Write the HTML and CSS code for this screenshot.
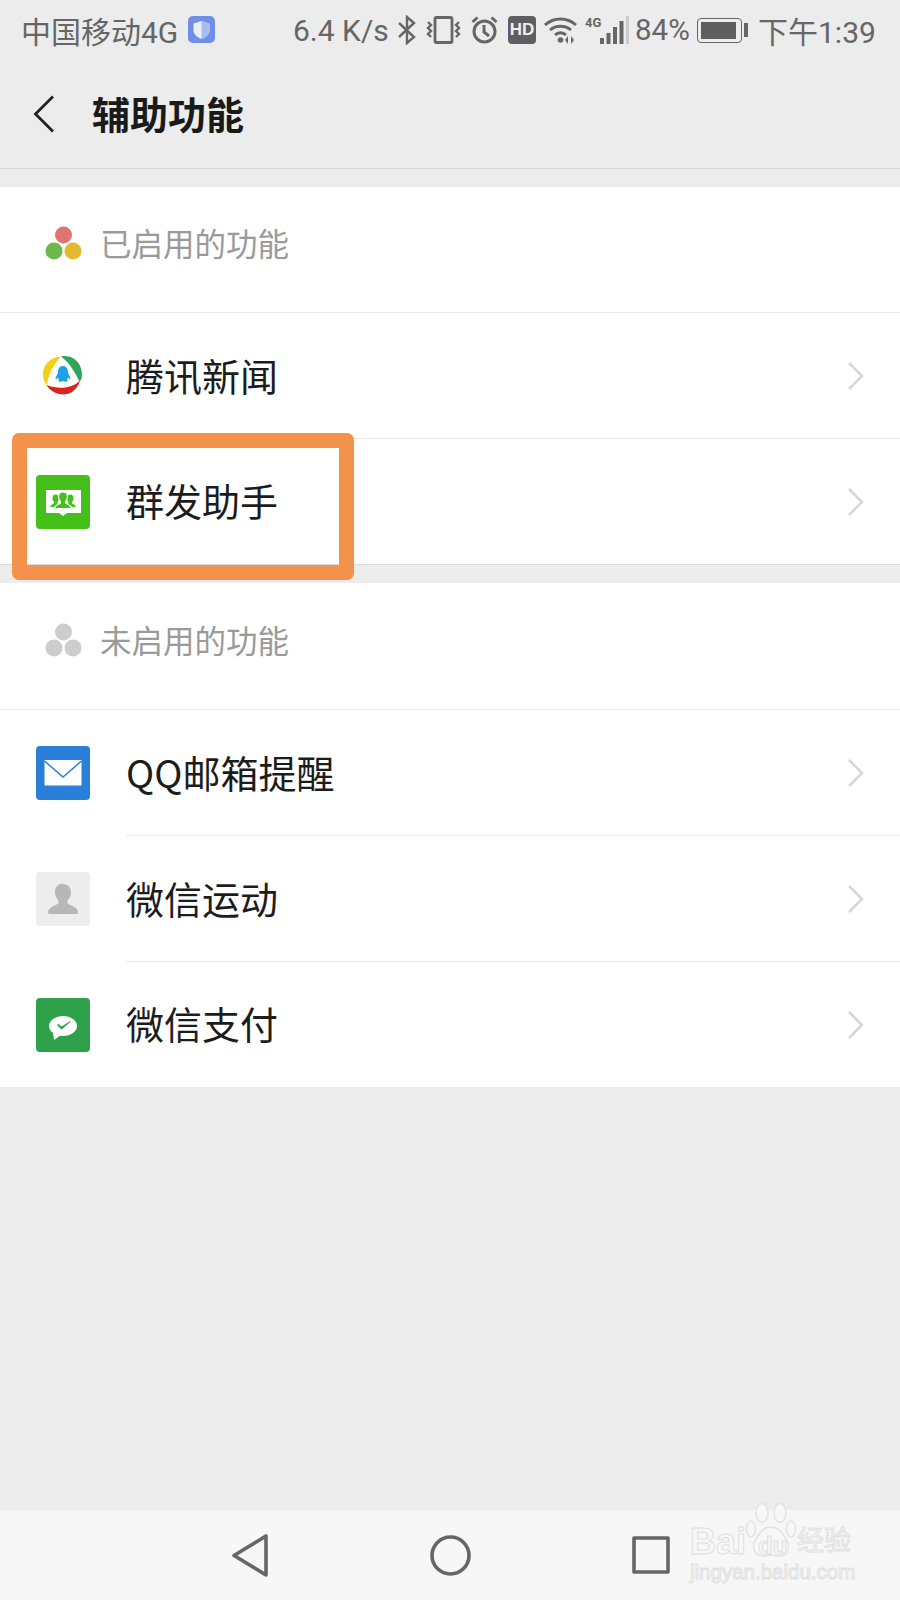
FILE: index.html
```html
<!DOCTYPE html>
<html lang="zh-CN">

<head>
    <meta charset="UTF-8">
    <meta name="viewport" content="width=device-width, initial-scale=1.0">
    <title>辅助功能</title>
    <link rel="stylesheet" href="styles.css">
</head>

<body>
    <div class="phone">
        <div class="status-bar">
            <span class="carrier">中国移动4G</span>
            <svg class="shield" width="28" height="28" viewBox="0 0 28 28">
                <rect width="27" height="27" rx="5" fill="#6f8fe6"/>
                <path d="M13.5 5l8 2.500v7c0 4-3.500 6.500-8 8.500-4.500-2-8-4.500-8-8.500v-7z" fill="#e8eefc"/>
                <path d="M13.500 5l8 2.500v7c0 4-3.500 6.500-8 8.500z" fill="#a9bdf0"/>
            </svg>
            <span class="speed">6.4 K/s</span>
            <svg class="bt" width="20" height="30" viewBox="0 0 20 30" fill="none" stroke="#666" stroke-width="2.400">
                <path d="M2 8l15 14-7 6V2l7 6L2 22"/>
            </svg>
            <svg class="vibrate" width="35" height="28" viewBox="0 0 35 28" fill="none" stroke="#666" stroke-width="2.400">
                <rect x="9" y="1.500" width="17" height="25" rx="1.500" stroke-width="2.800"/>
                <path d="M2 6l3 3-3 3 3 3-3 3 3 3M33 6l-3 3 3 3-3 3 3 3-3 3"/>
            </svg>
            <svg class="clock" width="27" height="28" viewBox="0 0 27 28" fill="none" stroke="#666" stroke-width="3">
                <circle cx="13.500" cy="15.500" r="10.500"/>
                <path d="M13 9v7l5 4"/>
                <path d="M1.500 6l5-4.500M25.500 6l-5-4.500"/>
            </svg>
            <span class="hd">HD</span>
            <svg class="wifi" width="33" height="28" viewBox="0 0 33 28" fill="none" stroke="#666" stroke-width="2.800">
                <path d="M1 9C10 1 23 1 32 9M6 14c6-5 15-5 21 0M11 19c3-3 8-3 11 0"/>
                <circle cx="16.500" cy="24" r="2.800" fill="#666" stroke="none"/>
                <path d="M24 20v8l-3-4zM27 20v8l3-4z" fill="#666" stroke="none"/>
            </svg>
            <span class="net-wrap">
                <span class="net">4G</span>
                <svg width="29" height="28" viewBox="0 0 29 28" fill="#666">
                    <rect x="0" y="22" width="4" height="6"/>
                    <rect x="6.500" y="17" width="4" height="11"/>
                    <rect x="13" y="11" width="4" height="17"/>
                    <rect x="19.500" y="5" width="4" height="23"/>
                    <rect x="26" y="0" width="3" height="28" fill="#c9c9c9"/>
                </svg>
            </span>
            <span class="battery-text">84%</span>
            <span class="battery"><span class="battery-fill"></span></span>
            <span class="battery-tip"></span>
            <span class="time">下午1:39</span>
        </div>

        <div class="title-bar">
            <svg class="back" width="22" height="38" viewBox="0 0 22 38" fill="none" stroke="#222" stroke-width="2.800">
                <path d="M20 1.500L2.500 19 20 36.500"/>
            </svg>
            <h1>辅助功能</h1>
        </div>

        <div class="section first-section">
            <div class="section-head">
                <svg width="38" height="34" viewBox="0 0 38 34">
                    <circle cx="18.500" cy="9" r="8.500" fill="#e07474"/>
                    <circle cx="9" cy="25" r="8.500" fill="#6db84c"/>
                    <circle cx="28" cy="25" r="8.500" fill="#e4b92f"/>
                </svg>
                <span>已启用的功能</span>
            </div>
            <div class="row">
                <svg class="app-icon" width="54" height="54" viewBox="0 0 54 54">
                    <path d="M25 7.500C14 8 7 16 7 25c0 4 1 8 4 11.500C12 27 16 17 25 7.500z" fill="#f5cf14"/>
                    <path d="M25 7.500C37 5 46 14 46 26c0 3-1 5-2.500 7C40 25 34 14 25 7.500z" fill="#2ea55a"/>
                    <path d="M10.500 36C16 46 33 50 41 38c1.500-2 2.500-4 2.500-6-7 7-20 9-33 4z" fill="#d9261c"/>
                    <path d="M27 17c3.500 0 5 3 5 6 0 2 2 4 2.500 6.500 0 1-1 1-1.500 0l-1-1c-.5 1.500-1 2.500-.5 3.500 0 1-3 1-4.500 0-1.500 1-4.500 1-4.500 0 .5-1 0-2-.5-3.500l-1 1c-.5 1-1.500 1-1.500 0 .5-2.500 2.500-4.500 2.500-6.500 0-3 1.500-6 5-6z" fill="#1da1e6"/>
                </svg>
                <span class="row-label">腾讯新闻</span>
                <svg class="chevron" width="18" height="30" viewBox="0 0 18 30" fill="none" stroke="#d6d6d6" stroke-width="2.500">
                    <path d="M2 2l13 13L2 28"/>
                </svg>
            </div>
            <div class="row short-row">
                <svg class="app-icon" width="54" height="54" viewBox="0 0 54 54">
                    <rect width="54" height="54" rx="4" fill="#45c01a"/>
                    <path d="M10 15h35v23H31l-4 3-4-3H10z" fill="#fff"/>
                    <path d="M19.500 19.500c2.200 0 3.500 1.800 3.500 4 0 1.500-.7 2.700-1.500 3.500v1.500l2 3.500H15c-.5 0-.8-.5-.5-1 1-1.300 2.500-2 3.500-2.700V27c-.8-.8-1.500-2-1.500-3.500 0-2.200.8-4 3-4z" fill="#45c01a"/>
                    <path d="M34.500 19.500c-2.200 0-3.500 1.800-3.500 4 0 1.500.7 2.700 1.500 3.500v1.500l-2 3.500H39c.5 0 .8-.5.5-1-1-1.300-2.500-2-3.500-2.700V27c.8-.8 1.500-2 1.500-3.500 0-2.200-.8-4-3-4z" fill="#45c01a"/>
                    <path d="M27 17c2.800 0 4.500 2.200 4.500 5 0 1.800-.8 3.200-1.800 4.200v2c2 1 4.500 2 5.300 3.300 0 1-.2 2-1 2H20c-.8 0-1-1-1-2 .8-1.300 3.300-2.300 5.300-3.300v-2c-1-1-1.800-2.400-1.800-4.200 0-2.800 1.700-5 4.500-5z" fill="#45c01a" stroke="#fff" stroke-width="1.200"/>
                </svg>
                <span class="row-label">群发助手</span>
                <svg class="chevron" width="18" height="30" viewBox="0 0 18 30" fill="none" stroke="#d6d6d6" stroke-width="2.500">
                    <path d="M2 2l13 13L2 28"/>
                </svg>
            </div>
        </div>

        <div class="section second-section">
            <div class="section-head">
                <svg width="38" height="34" viewBox="0 0 38 34">
                    <circle cx="18.500" cy="9" r="8.500" fill="#cdcdcd"/>
                    <circle cx="9" cy="25" r="8.500" fill="#cdcdcd"/>
                    <circle cx="28" cy="25" r="8.500" fill="#cdcdcd"/>
                </svg>
                <span>未启用的功能</span>
            </div>
            <div class="row">
                <svg class="app-icon" width="54" height="54" viewBox="0 0 54 54">
                    <rect width="54" height="54" rx="4" fill="#2a7fd9"/>
                    <rect x="8.500" y="14" width="37" height="25.500" fill="#fff"/>
                    <path d="M8.500 15L27 31l18.500-16" fill="none" stroke="#2a7fd9" stroke-width="1.500"/>
                </svg>
                <span class="row-label">QQ邮箱提醒</span>
                <svg class="chevron" width="18" height="30" viewBox="0 0 18 30" fill="none" stroke="#d6d6d6" stroke-width="2.500">
                    <path d="M2 2l13 13L2 28"/>
                </svg>
            </div>
            <div class="row">
                <svg class="app-icon" width="54" height="54" viewBox="0 0 54 54">
                    <rect width="54" height="54" rx="4" fill="#ededed"/>
                    <path d="M27 12c5 0 8 4 8 8.500 0 3.500-1.500 6-3.500 8v3c3 2 10 3.500 10.500 8.500 0 1.500-.5 2-2 2H14c-1.500 0-2-.5-2-2 .5-5 7.500-6.500 10.500-8.500v-3c-2-2-3.500-4.500-3.500-8.500 0-4.500 3-8.500 8-8.500z" fill="#b7b7b7"/>
                </svg>
                <span class="row-label">微信运动</span>
                <svg class="chevron" width="18" height="30" viewBox="0 0 18 30" fill="none" stroke="#d6d6d6" stroke-width="2.500">
                    <path d="M2 2l13 13L2 28"/>
                </svg>
            </div>
            <div class="row short-row">
                <svg class="app-icon" width="54" height="54" viewBox="0 0 54 54">
                    <rect width="54" height="54" rx="4" fill="#2ea24a"/>
                    <ellipse cx="27" cy="28" rx="14" ry="10" fill="#fff"/>
                    <path d="M17 34l1 8 7-5z" fill="#fff"/>
                    <path d="M21 27l1.500-1 3 2.500 9-5.500.5.500-9.500 8z" fill="#2ea24a"/>
                </svg>
                <span class="row-label">微信支付</span>
                <svg class="chevron" width="18" height="30" viewBox="0 0 18 30" fill="none" stroke="#d6d6d6" stroke-width="2.500">
                    <path d="M2 2l13 13L2 28"/>
                </svg>
            </div>
        </div>

        <div class="filler"></div>

        <div class="nav-bar">
            <svg width="37" height="43" viewBox="0 0 37 43" fill="none" stroke="#666" stroke-width="3.600" stroke-linejoin="round">
                <path d="M34 2v39L2 21.500z"/>
            </svg>
            <svg width="41" height="41" viewBox="0 0 41 41" fill="none" stroke="#666" stroke-width="3.600">
                <circle cx="20.500" cy="20.500" r="18.500"/>
            </svg>
            <svg width="38" height="38" viewBox="0 0 38 38" fill="none" stroke="#666" stroke-width="3.600" stroke-linejoin="round">
                <rect x="2" y="2" width="34" height="34"/>
            </svg>
        </div>

        <!-- orange mark over the second row -->
        <div class="highlight"></div>

        <!-- baidu watermark -->
        <div class="watermark">
            <svg class="paw" width="52" height="56" viewBox="0 0 52 56" fill="#f7f7f7" stroke="#e3e3e3" stroke-width="1.500">
                <ellipse cx="6" cy="26" rx="4.500" ry="8"/>
                <ellipse cx="17" cy="10" rx="6" ry="9.500"/>
                <ellipse cx="35" cy="10" rx="6" ry="9.500"/>
                <ellipse cx="46" cy="26" rx="4.500" ry="8"/>
                <path d="M26 24c8 0 11 6 15 12 5 7 2 17-7 17-3 0-5-1-8-1s-5 1-8 1c-9 0-12-10-7-17 4-6 7-12 15-12z"/>
            </svg>
            <span class="wm-bai">Bai</span>
            <span class="wm-du">du</span>
            <span class="wm-cn">经验</span>
            <span class="wm-url">jingyan.baidu.com</span>
        </div>
    </div>
</body>

</html>
```
FILE: styles.css
```css
* {
    box-sizing: border-box;
}

body {
    margin: 0;
    padding: 0;
    font-family: "Noto Sans CJK SC", "Liberation Sans", sans-serif;
    background-color: #ececec;
}

.phone {
    position: relative;
    display: flex;
    flex-direction: column;
    width: 900px;
    height: 1600px;
    overflow: hidden;
}

/* status bar */
.status-bar {
    display: flex;
    align-items: center;
    height: 62px;
    padding: 0 0 2px 21px;
    color: #666;
    font-family: Roboto, "Noto Sans CJK SC", sans-serif;
    font-size: 29px;
    white-space: nowrap;
}

.carrier {
    width: 167px;
    font-size: 30px;
}

.shield {
    margin-top: -1px;
}

.speed {
    width: 98px;
    margin-left: 77px;
    font-size: 30px;
}

.bt {
    margin-left: 6px;
}

.vibrate {
    margin-left: 9px;
}

.clock {
    margin-left: 10px;
}

.hd {
    width: 28px;
    height: 28px;
    margin-left: 10px;
    border-radius: 4px;
    background-color: #5f5f5f;
    color: #eee;
    font-family: "Liberation Sans", sans-serif;
    font-size: 17px;
    font-weight: bold;
    line-height: 28px;
    text-align: center;
}

.wifi {
    margin-left: 8px;
}

.net-wrap {
    display: flex;
    align-items: flex-start;
    width: 44px;
    height: 28px;
    margin-left: 8px;
}

.net {
    flex-shrink: 0;
    width: 15px;
    font-size: 13px;
    font-weight: bold;
    line-height: 13px;
}

.battery-text {
    width: 54px;
    margin-left: 6px;
    font-size: 29.500px;
}

.battery {
    width: 45px;
    height: 25px;
    margin-left: 8px;
    padding: 3px;
    border: 1.500px solid #666;
    border-radius: 4px;
}

.battery-fill {
    display: block;
    width: 35px;
    height: 100%;
    background-color: #5f5f5f;
}

.battery-tip {
    width: 4px;
    height: 14px;
    margin-left: 2px;
    background-color: #666;
}

.time {
    margin-left: 10px;
    font-size: 30px;
}

/* title */
.title-bar {
    display: flex;
    align-items: center;
    height: 107px;
    padding: 0 0 3px 33px;
    border-bottom: 1px solid #d9d9d9;
}

.title-bar h1 {
    margin: 0 0 2px 37px;
    color: #1a1a1a;
    font-size: 38px;
    font-weight: bold;
    line-height: 1;
}

/* lists */
.section {
    margin-top: 18px;
    background-color: #fff;
}

.first-section {
    border-bottom: 1px solid #dcdcdc;
}

.second-section {
    padding-top: 1px;
}

.section-head {
    display: flex;
    align-items: center;
    height: 126px;
    padding: 0 0 14px 45px;
    border-bottom: 1px solid #e8e8e8;
    color: #9a9a9a;
    font-size: 31.500px;
}

.section-head span {
    margin-left: 17px;
    margin-bottom: 2px;
}

.row {
    position: relative;
    display: flex;
    align-items: center;
    height: 126px;
    padding: 0 35px 0 36px;
}

.short-row {
    height: 125px;
}

.row + .row::before {
    content: "";
    position: absolute;
    top: -1px;
    left: 126px;
    right: 0;
    height: 1px;
    background-color: #e8e8e8;
}

.app-icon {
    flex-shrink: 0;
}

.row-label {
    flex: 1;
    margin-left: 36px;
    margin-bottom: 3px;
    color: #1c1c1c;
    font-size: 38px;
    line-height: 1;
}

.filler {
    flex: 1;
}

/* bottom nav */
.nav-bar {
    display: flex;
    align-items: center;
    gap: 161px;
    height: 90px;
    padding: 0 0 0 232px;
    background-color: #f7f7f7;
}

/* overlays */
.highlight {
    position: absolute;
    top: 433px;
    left: 12px;
    width: 342px;
    height: 147px;
    border: 15px solid #f3924a;
    border-radius: 7px;
}

.watermark {
    position: absolute;
    top: 1503px;
    left: 690px;
    width: 165px;
    height: 80px;
    color: #f7f7f7;
    font-family: "Liberation Sans", sans-serif;
    -webkit-text-stroke: 1px #e0e0e0;
}

.paw {
    position: absolute;
    top: 0;
    left: 55px;
}

.watermark span {
    position: absolute;
    line-height: 1;
}

.wm-bai {
    top: 21px;
    left: 0;
    font-size: 36px;
    font-weight: bold;
}

.wm-du {
    top: 31px;
    left: 68px;
    font-size: 24px;
    font-weight: bold;
}

.wm-cn {
    top: 22px;
    left: 107px;
    font-family: "Noto Sans CJK SC", sans-serif;
    font-size: 27px;
}

.wm-url {
    top: 59px;
    left: 0;
    font-size: 20.500px;
}
```
